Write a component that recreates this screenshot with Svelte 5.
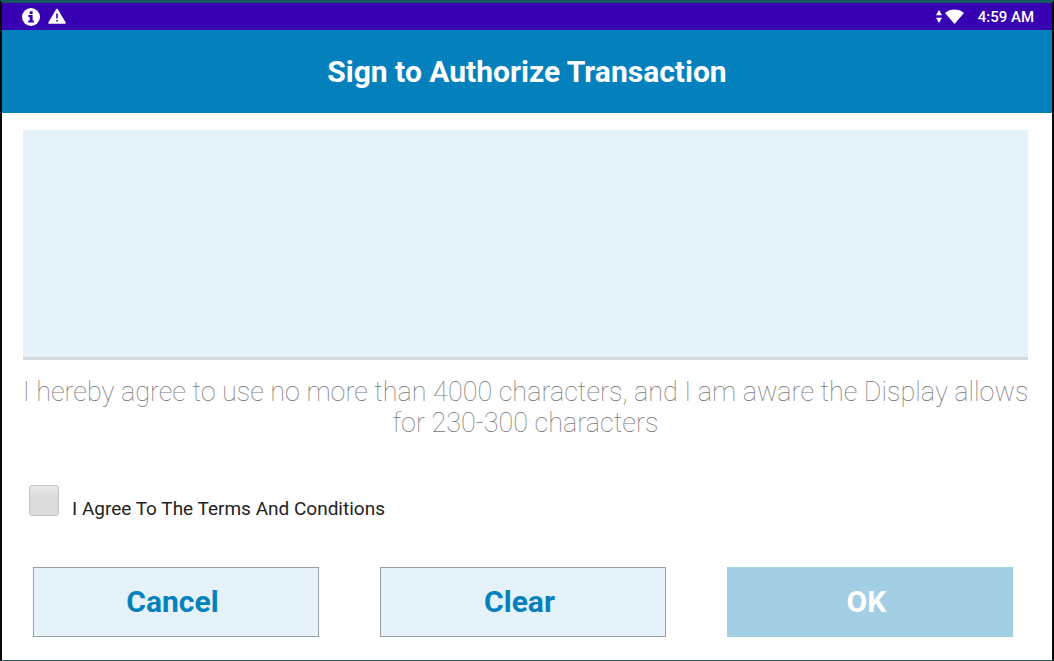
<script>
  let agreed = $state(false);
  let signed = $state(false);
  let pad;
  let drawing = false;

  function point(event) {
    const box = pad.getBoundingClientRect();
    return [
      ((event.clientX - box.left) * pad.width) / box.width,
      ((event.clientY - box.top) * pad.height) / box.height
    ];
  }

  function start(event) {
    drawing = true;
    const ctx = pad.getContext('2d');
    ctx.lineWidth = 2;
    ctx.beginPath();
    ctx.moveTo(...point(event));
  }

  function move(event) {
    if (!drawing) return;
    const ctx = pad.getContext('2d');
    ctx.lineTo(...point(event));
    ctx.stroke();
    signed = true;
  }

  function stop() {
    drawing = false;
  }

  function clear() {
    pad.getContext('2d').clearRect(0, 0, pad.width, pad.height);
    signed = false;
  }
</script>

<div class="screen">
  <div class="status">
    <div class="group">
      <svg width="18" height="18" viewBox="0 0 18 18" aria-hidden="true">
        <circle cx="9" cy="9" r="9" fill="#fff" />
        <path d="M7.700 3.200h2.900v2.700H7.700zM6.300 7h4.300v5.500h1.300v1.900H6.200v-1.900h1.500V8.900H6.300z" fill="#3700b3" />
      </svg>
      <svg width="18" height="18" viewBox="0 0 18 18" aria-hidden="true">
        <path d="M9 1.500 17 15H1z" fill="#fff" stroke="#fff" stroke-width="1.600" stroke-linejoin="round" />
        <path d="M8.200 5.500h1.600v5H8.200zM8.200 11.900h1.600v1.600H8.200z" fill="#3700b3" />
      </svg>
    </div>
    <div class="group right">
      <svg width="28" height="16" viewBox="0 0 28 16" aria-hidden="true">
        <path d="M0 6.200 3 1l3 5.200zM0 8.800h6L3 14z" fill="#fff" />
        <path d="M9 4C14.500 -0.600 22.500 -0.600 28 4L18.500 15z" fill="#fff" />
      </svg>
      <time>4:59 AM</time>
    </div>
  </div>

  <header><h1>Sign to Authorize Transaction</h1></header>

  <main>
    <canvas
      bind:this={pad}
      width="1005"
      height="227"
      aria-label="Signature"
      onpointerdown={start}
      onpointermove={move}
      onpointerup={stop}
      onpointerleave={stop}
    ></canvas>

    <p>I hereby agree to use no more than 4000 characters, and I am aware the Display allows for 230-300 characters</p>

    <div class="terms">
      <input id="agree" type="checkbox" bind:checked={agreed} />
      <label for="agree">I Agree To The Terms And Conditions</label>
    </div>

    <div class="actions">
      <button type="button">Cancel</button>
      <button type="button" onclick={clear}>Clear</button>
      <button type="button" class="ok" disabled={!agreed || !signed}>OK</button>
    </div>
  </main>
</div>

<style>
  :global(body) {
    background: #fff;
  }

  .screen {
    box-sizing: border-box;
    min-height: 100vh;
    display: flex;
    flex-direction: column;
    border: 2px solid #080808;
    border-top: 3px solid #175a60;
    border-bottom: 1px solid #20605f;
    background: #fff;
    color: #222;
    font-family: Roboto, sans-serif;
  }

  .status {
    height: 27px;
    display: flex;
    align-items: center;
    justify-content: space-between;
    padding: 0 18px 0 20px;
    background: #3700b3;
    color: #fff;
    font-size: 15px;
    font-weight: 500;
  }

  .group {
    display: flex;
    align-items: center;
    gap: 8px;
  }

  .right {
    gap: 14px;
  }

  svg {
    display: block;
  }

  header {
    height: 83px;
    display: flex;
    align-items: center;
    justify-content: center;
    background: #0481bd;
    color: #fff;
  }

  h1 {
    margin: 0;
    font-size: 30px;
    line-height: 36px;
    font-weight: 700;
  }

  main {
    flex: 1;
    display: flex;
    flex-direction: column;
    padding: 17px 24px 23px 21px;
  }

  canvas {
    box-sizing: border-box;
    display: block;
    width: 100%;
    height: 230px;
    background: #e5f2fa;
    border-bottom: 3px solid #d2dade;
    touch-action: none;
  }

  p {
    margin: 17px -10px 0;
    color: #777;
    font-size: 27px;
    line-height: 31px;
    font-weight: 100;
    text-align: center;
  }

  .terms {
    display: flex;
    align-items: center;
    gap: 13px;
    margin: auto 0 46px 6px;
  }

  input {
    appearance: none;
    width: 30px;
    height: 31px;
    margin: 0;
    border: 1px solid #c4c4c4;
    border-radius: 3px;
    background: linear-gradient(#e8e8e8, #dcdcdc 35%);
  }

  input:checked {
    background: #0481bd;
  }

  label {
    padding-top: 18px;
    font-size: 19px;
    line-height: 24px;
    font-weight: 450;
  }

  .actions {
    display: grid;
    grid-template-columns: repeat(3, 1fr);
    gap: 61px;
    padding: 0 15px 0 10px;
  }

  button {
    height: 70px;
    padding: 0 7px 2px 0;
    border: 1px solid #999fa2;
    background: #e5f2fa;
    color: #0481bd;
    font-family: inherit;
    font-size: 30px;
    font-weight: 700;
  }

  .ok {
    border-color: #0481bd;
    background: #0481bd;
    color: #fff;
  }

  .ok:disabled {
    border-color: #a3cfe5;
    background: #a3cfe5;
  }
</style>
